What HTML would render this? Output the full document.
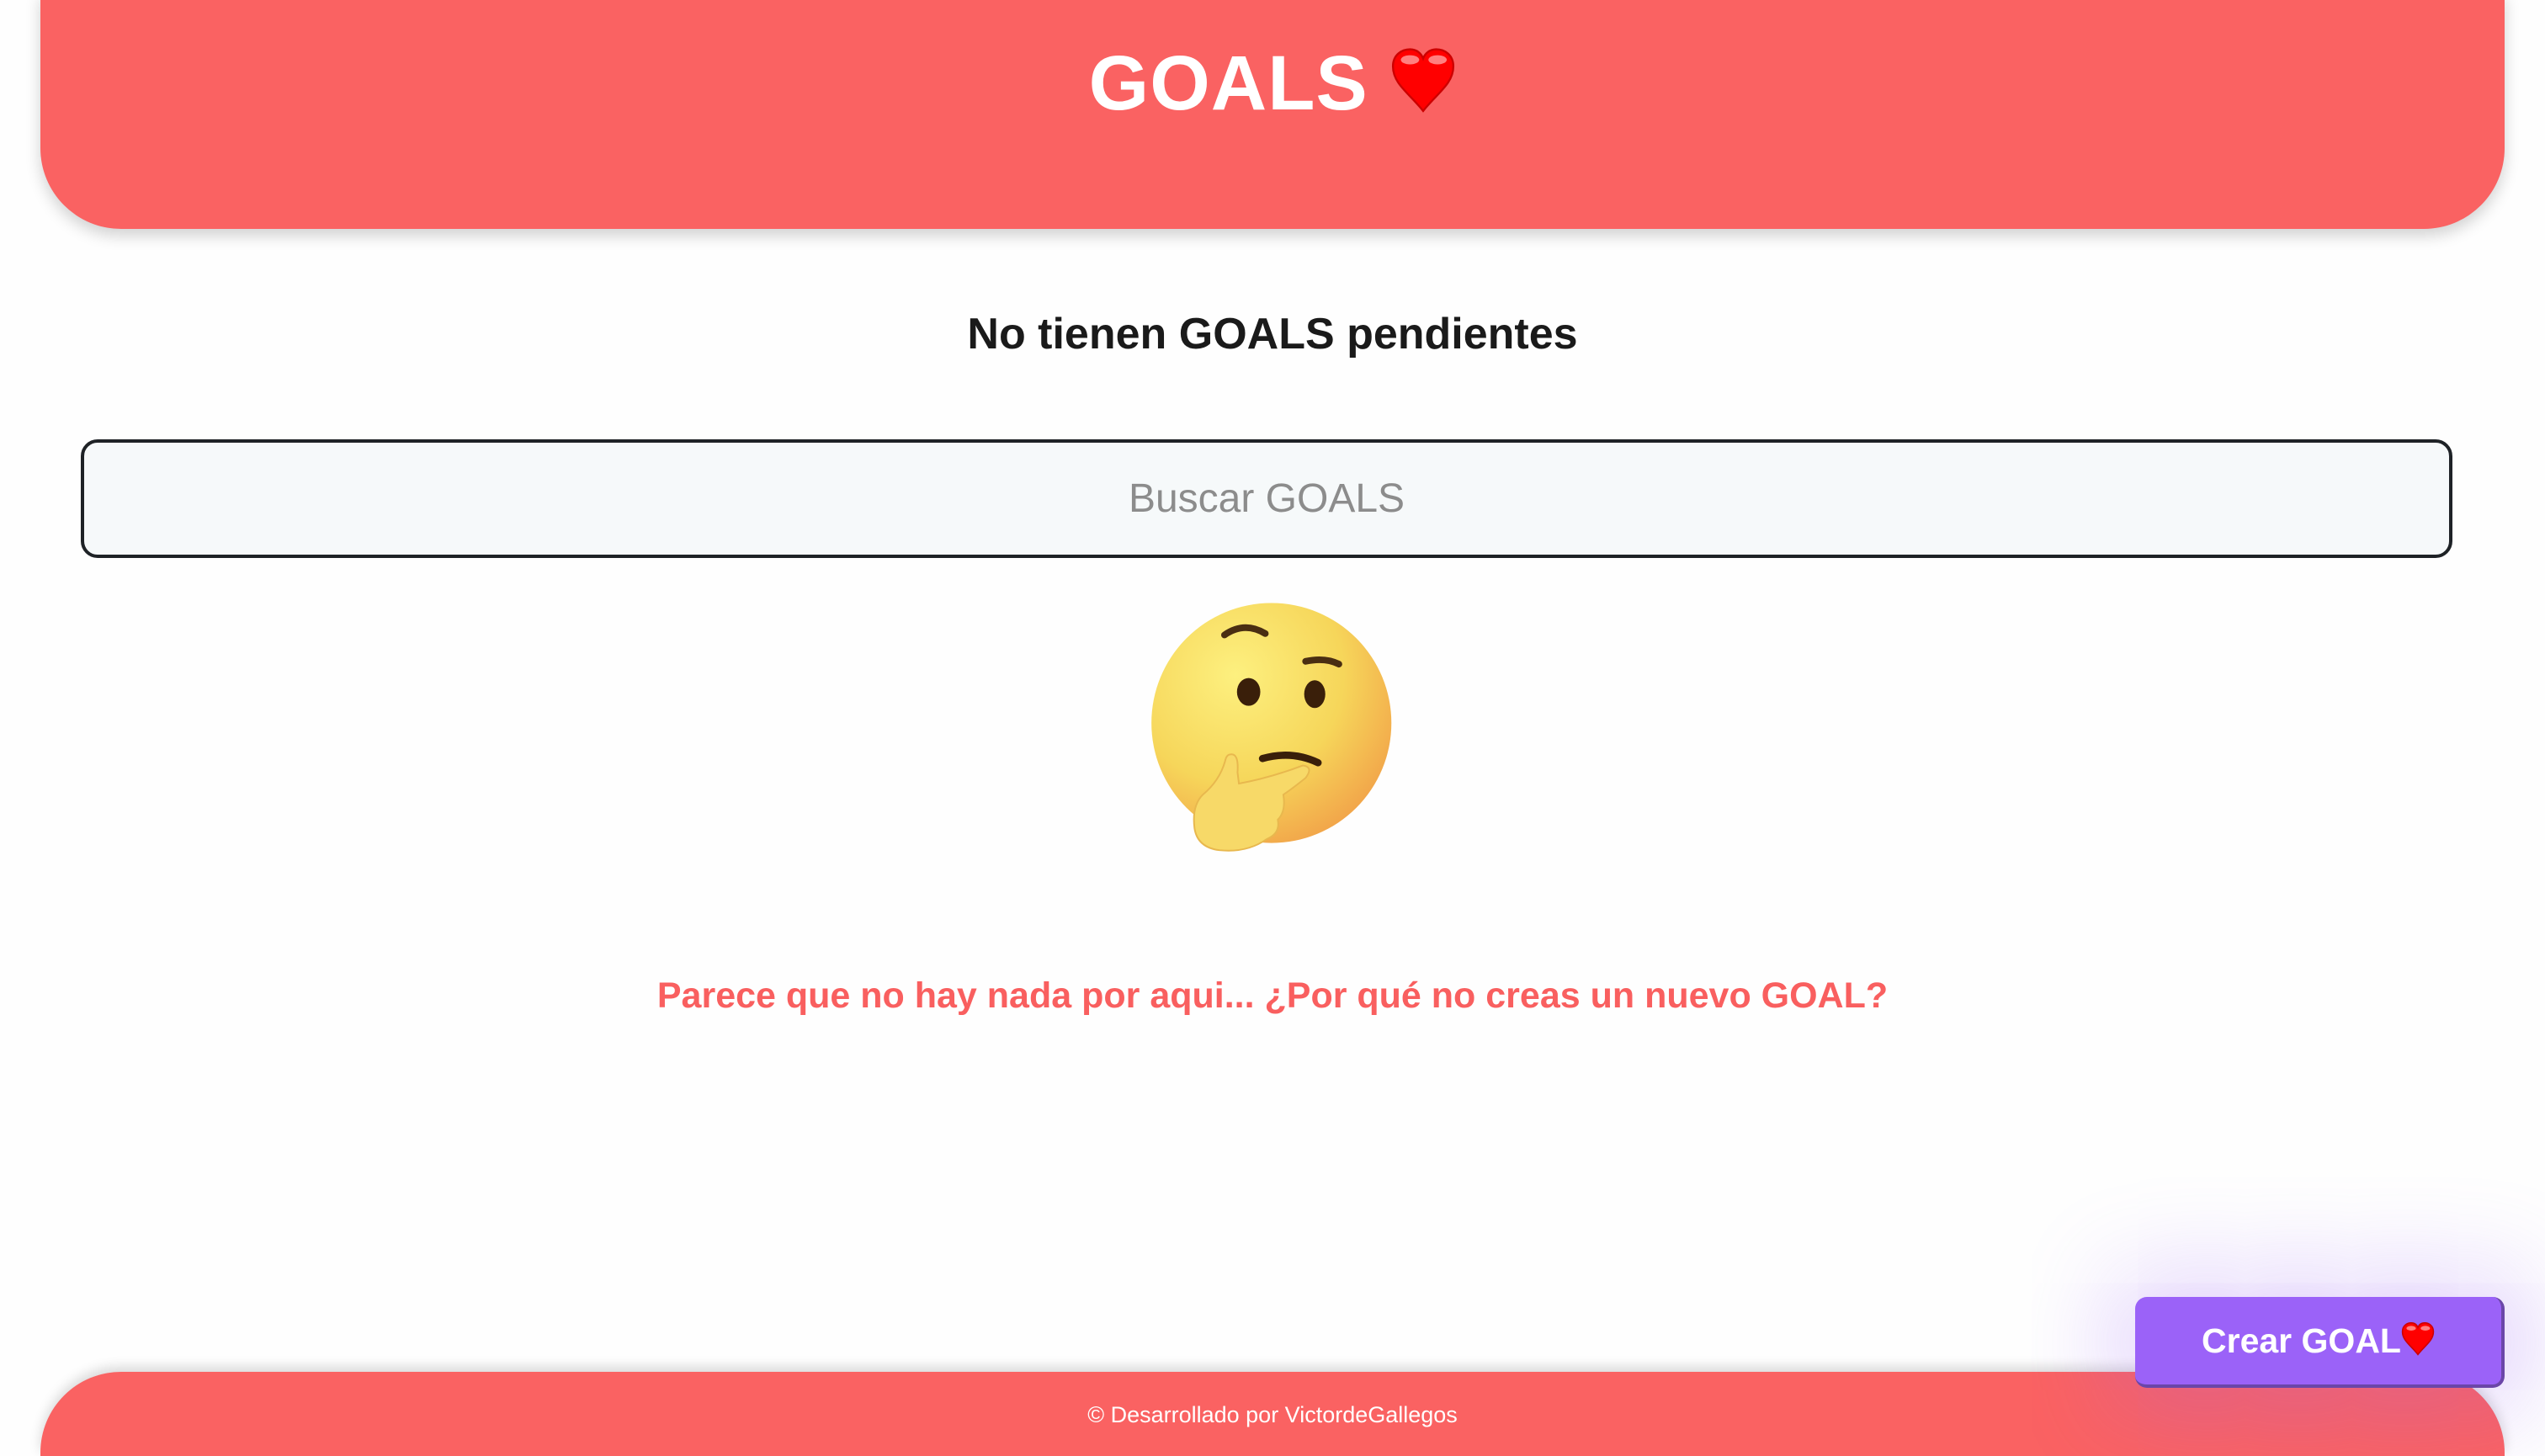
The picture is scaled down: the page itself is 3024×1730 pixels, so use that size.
<!DOCTYPE html>
<html><head><meta charset="utf-8"><style>
html,body{margin:0;padding:0;background:#fefefe;width:3024px;height:1730px;overflow:hidden;position:relative;font-family:"Liberation Sans",sans-serif}
.hdr{position:absolute;left:48px;top:-10px;width:2928px;height:282px;background:#fa6262;border-radius:0 0 96px 96px;box-shadow:0 8px 18px rgba(0,0,0,0.18)}
.title{position:absolute;left:0;width:3024px;top:44px;text-align:center;color:#fff;font-weight:bold;font-size:92px;line-height:110px;letter-spacing:1px}
.sub{position:absolute;left:0;width:3024px;top:365px;text-align:center;color:#1a1a1a;font-weight:bold;font-size:52px;line-height:64px}
.inp{position:absolute;left:96px;top:522px;width:2818px;height:141px;box-sizing:border-box;border:4px solid #1e2226;border-radius:20px;background:#f6f9fa;color:#8c8c8c;font-size:48px;text-align:center;line-height:133px}
.msg{position:absolute;left:0;width:3024px;top:1155px;text-align:center;color:#f95f5f;font-weight:bold;font-size:43px;line-height:56px}
.ftr{position:absolute;left:48px;top:1630px;width:2928px;height:100px;background:#fa6262;border-radius:96px 96px 0 0;box-shadow:0 -6px 14px rgba(0,0,0,0.15)}
.ftxt{position:absolute;left:0;width:3024px;top:1664px;text-align:center;color:#fff;font-size:27px;line-height:34px}
.btn{position:absolute;left:2537px;top:1541px;width:439px;height:108px;box-sizing:border-box;background:#9b62f8;border-right:4px solid #6b46a8;border-bottom:4px solid #6b46a8;border-radius:14px;box-shadow:0 0 110px 30px rgba(155,98,248,0.28);color:#fff;font-weight:bold;font-size:41px;line-height:104px;text-align:center}
</style></head><body>
<div class="hdr"></div>
<div class="title">GOALS <svg width="78" height="84" viewBox="0 0 100 100" style="vertical-align:-8px"><path d="M50 96 C30 70 4 55 4 28 C4 10 18 2 30 2 C40 2 47 8 50 16 C53 8 60 2 70 2 C82 2 96 10 96 28 C96 55 70 70 50 96Z" fill="#f00" stroke="#c00" stroke-width="3"/><ellipse cx="30" cy="18" rx="14" ry="7" fill="#fff" opacity=".5"/><ellipse cx="72" cy="18" rx="14" ry="7" fill="#fff" opacity=".5"/></svg></div>
<div class="sub">No tienen GOALS pendientes</div>
<div class="inp">Buscar GOALS</div>
<svg style="position:absolute;left:1350px;top:700px" width="330" height="330" viewBox="0 0 1000 1000">
<defs><radialGradient id="g" cx="35%" cy="30%" r="75%"><stop offset="0" stop-color="#fdf07f"/><stop offset=".6" stop-color="#f6d65a"/><stop offset="1" stop-color="#f2a64a"/></radialGradient></defs>
<circle cx="487" cy="482" r="432" fill="url(#g)"/>
<path d="M318 165 Q390 115 465 160" stroke="#4a2e12" stroke-width="24" fill="none" stroke-linecap="round"/>
<path d="M610 260 Q680 245 730 270" stroke="#4a2e12" stroke-width="24" fill="none" stroke-linecap="round"/>
<ellipse cx="405" cy="370" rx="42" ry="50" fill="#3a1f0a"/>
<ellipse cx="643" cy="378" rx="38" ry="50" fill="#3a1f0a"/>
<path d="M455 610 Q560 580 655 625" stroke="#3a1f0a" stroke-width="26" fill="none" stroke-linecap="round"/>
<path d="M340 595 Q370 590 365 660 L370 700 Q480 680 600 635 Q640 640 610 680 Q560 720 530 740 Q540 800 510 830 Q520 880 470 900 Q400 950 300 940 Q220 930 210 860 Q200 780 240 740 Q300 690 320 620 Q325 595 340 595Z" fill="#f7d968" stroke="#e8b84e" stroke-width="6"/>
</svg>
<div class="msg">Parece que no hay nada por aqui... ¿Por qué no creas un nuevo GOAL?</div>
<div class="ftr"></div>
<div class="ftxt">© Desarrollado por VictordeGallegos</div>
<div class="btn">Crear GOAL<svg width="40" height="44" viewBox="0 0 100 100" style="vertical-align:-6px"><path d="M50 96 C30 70 4 55 4 28 C4 10 18 2 30 2 C40 2 47 8 50 16 C53 8 60 2 70 2 C82 2 96 10 96 28 C96 55 70 70 50 96Z" fill="#f00" stroke="#c00" stroke-width="4"/><ellipse cx="30" cy="18" rx="14" ry="7" fill="#fff" opacity=".5"/><ellipse cx="72" cy="18" rx="14" ry="7" fill="#fff" opacity=".5"/></svg></div>
</body></html>
